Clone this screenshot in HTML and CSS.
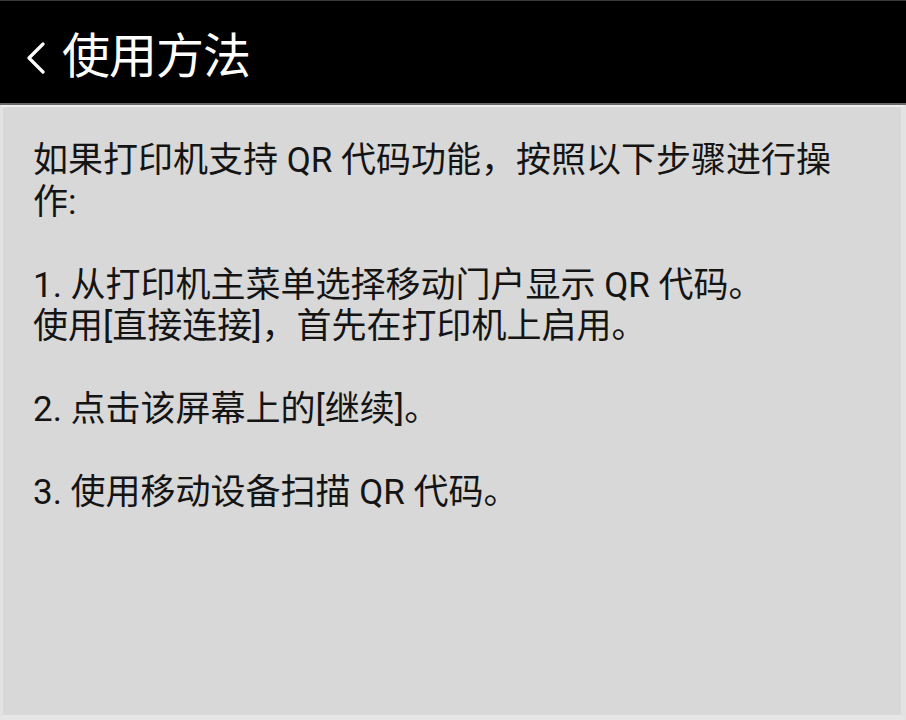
FILE: index.html
```html
<!DOCTYPE html>
<html lang="zh-CN">
<head>
<meta charset="utf-8">
<title>使用方法</title>
<link rel="stylesheet" href="styles.css">
</head>
<body>
<div class="screen">
  <header class="topbar">
    <svg class="back" width="20" height="32" viewBox="0 0 20 32" aria-hidden="true">
      <polyline points="17,2 3,16 17,30" fill="none" stroke="#ffffff" stroke-width="3.2" stroke-linecap="round" stroke-linejoin="round"/>
    </svg>
    <h1 class="title">使用方法</h1>
  </header>
  <main class="content">
    <p class="para">如果打印机支持 QR 代码功能，按照以下步骤进行操作:</p>
    <p class="para">1. 从打印机主菜单选择移动门户显示 QR 代码。<br>使用[直接连接]，首先在打印机上启用。</p>
    <p class="para">2. 点击该屏幕上的[继续]。</p>
    <p class="para">3. 使用移动设备扫描 QR 代码。</p>
  </main>
</div>
</body>
</html>
```

FILE: styles.css
```css
html, body {
  margin: 0;
  padding: 0;
  background: #d8d8d8;
}
body {
  width: 906px;
  height: 720px;
  overflow: hidden;
  font-family: "Roboto", "Noto Sans CJK SC", sans-serif;
}
.screen {
  display: flex;
  flex-direction: column;
  height: 720px;
}
.topbar {
  flex: none;
  box-sizing: border-box;
  height: 105px;
  background: #000;
  border-top: 1px solid #3a3a3a;
  border-bottom: 2px solid #6a6a6a;
  display: flex;
  align-items: center;
  padding-left: 26px;
  padding-top: 10px;
  gap: 16px;
}
.back {
  display: block;
  margin-top: 2px;
}
.title {
  margin: 0;
  color: #fff;
  font-weight: 400;
  font-size: 48px;
  line-height: 1;
  letter-spacing: -1px;
}
.content {
  flex: 1;
  background: #d8d8d8;
  border-top: 2px solid #efefef;
  border-left: 3px solid #e3e3e3;
  border-right: 5px solid #e3e3e3;
  border-bottom: 5px solid #e6e6e6;
  padding: 33px 40px 0 30px;
  box-sizing: border-box;
  color: #141414;
  font-size: 35px;
  line-height: 41.5px;
}
.para {
  margin: 0 0 41.5px 0;
}
```
